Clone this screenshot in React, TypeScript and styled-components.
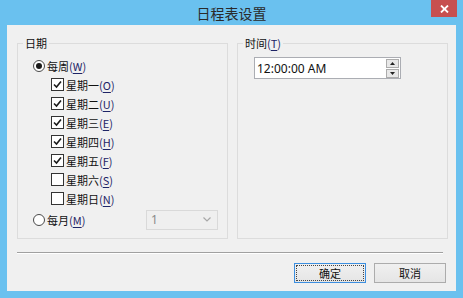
import styled, { createGlobalStyle } from "styled-components";

const GlobalStyle = createGlobalStyle`
  html, body {
    margin: 0;
    padding: 0;
  }
  body {
    font-family: "Noto Sans CJK SC", "Noto Sans", sans-serif;
    font-size: 11px;
    color: #111;
  }
`;

const Window = styled.div`
  width: 463px;
  height: 298px;
  background: #6ac1ef;
  display: flex;
  flex-direction: column;
`;

const TitleBar = styled.div`
  height: 25px;
  display: grid;
  grid-template-columns: 1fr auto 1fr;
  align-items: start;
`;

const Title = styled.div`
  grid-column: 2;
  font-size: 14px;
  line-height: 26px;
  color: #2a2a2a;
`;

const CloseButton = styled.div`
  grid-column: 3;
  justify-self: end;
  margin-right: 6px;
  width: 26px;
  height: 17px;
  background: #c75050;
  display: flex;
  align-items: center;
  justify-content: center;
`;

const Client = styled.div`
  flex: 1;
  margin: 0 7px 7px;
  background: #f0f0f0;
  padding: 18px 8px 0 10px;
  display: flex;
  flex-direction: column;
`;

const Groups = styled.div`
  display: grid;
  grid-template-columns: 211px 211px;
  gap: 9px;
`;

const Group = styled.div`
  position: relative;
  box-sizing: border-box;
  height: 196px;
  border: 1px solid #dcdcdc;
  padding: ${(p: { $pad: string }) => p.$pad};
`;

const Legend = styled.span`
  position: absolute;
  top: -10px;
  left: 5px;
  padding: 0 2px;
  line-height: 18px;
  background: #f0f0f0;
`;

const Row = styled.div<{ $indent: number; $gap?: number }>`
  height: 19px;
  display: flex;
  align-items: center;
  padding-left: ${(p) => p.$indent}px;
  margin-top: ${(p) => p.$gap ?? 0}px;
`;

const Label = styled.span`
  margin-left: 2px;
  line-height: 16px;
  white-space: nowrap;
`;

const Key = styled.span`
  color: #1e2466;
  u {
    text-decoration-thickness: 1px;
    text-underline-offset: 2px;
  }
`;

const Radio = styled.span<{ $on?: boolean }>`
  box-sizing: border-box;
  width: 12px;
  height: 12px;
  border-radius: 50%;
  border: 1px solid #4a4a4a;
  background: #fff;
  display: flex;
  align-items: center;
  justify-content: center;
  &::after {
    content: "";
    width: 6px;
    height: 6px;
    border-radius: 50%;
    background: ${(p) => (p.$on ? "#1a1a1a" : "transparent")};
  }
`;

const Box = styled.span`
  box-sizing: border-box;
  width: 13px;
  height: 13px;
  border: 1px solid #333;
  background: #fff;
  display: flex;
  align-items: center;
  justify-content: center;
`;

const Select = styled.div`
  box-sizing: border-box;
  margin-left: auto;
  margin-right: 9px;
  width: 72px;
  height: 20px;
  border: 1px solid #d9d9d9;
  background: #efefef;
  color: #8a8a8a;
  display: flex;
  align-items: center;
  justify-content: space-between;
  padding: 0 6px 0 4px;
  font-family: "Noto Sans", sans-serif;
  font-size: 12px;
`;

const TimeBox = styled.div`
  box-sizing: border-box;
  width: 147px;
  height: 22px;
  border: 1px solid #abadb3;
  background: #fff;
  display: flex;
  align-items: center;
  padding: 0 1px 0 2px;
  font-family: "Noto Sans", sans-serif;
  font-size: 12px;
`;

const TimeText = styled.span`
  flex: 1;
`;

const Spinner = styled.div`
  display: flex;
  flex-direction: column;
  gap: 1px;
`;

const SpinButton = styled.div`
  box-sizing: border-box;
  width: 13px;
  height: 9px;
  border: 1px solid #acacac;
  background: #e8e8e8;
  display: flex;
  align-items: center;
  justify-content: center;
`;

const Separator = styled.div`
  margin: 13px 5px 0 0;
  border-top: 1px solid #a0a0a0;
  border-bottom: 1px solid #fff;
`;

const Buttons = styled.div`
  margin: 9px 2px 0 0;
  display: flex;
  justify-content: flex-end;
  gap: 8px;
`;

const Button = styled.div<{ $default?: boolean }>`
  box-sizing: border-box;
  width: 72px;
  height: 20px;
  border: 1px solid ${(p) => (p.$default ? "#3c8fe0" : "#acacac")};
  background: linear-gradient(#f0f0f0, #e5e5e5);
  padding: 1px;
  display: flex;
`;

const ButtonFace = styled.span<{ $focus?: boolean }>`
  flex: 1;
  box-sizing: border-box;
  border: 1px dotted ${(p) => (p.$focus ? "#444" : "transparent")};
  display: flex;
  align-items: center;
  justify-content: center;
  line-height: 14px;
`;

const days = [
  { name: "星期一", key: "O", on: true },
  { name: "星期二", key: "U", on: true },
  { name: "星期三", key: "E", on: true },
  { name: "星期四", key: "H", on: true },
  { name: "星期五", key: "F", on: true },
  { name: "星期六", key: "S", on: false },
  { name: "星期日", key: "N", on: false },
];

function Mnemonic({ k }: { k: string }) {
  return (
    <Key>
      (<u>{k}</u>)
    </Key>
  );
}

function Check() {
  return (
    <svg width="9" height="9" viewBox="0 0 9 9">
      <path d="M1 4.5 L3.5 7 L8 1.5" fill="none" stroke="#1a1a1a" strokeWidth="1.6" />
    </svg>
  );
}

export default function App() {
  return (
    <>
      <GlobalStyle />
      <Window>
        <TitleBar>
          <Title>日程表设置</Title>
          <CloseButton>
            <svg width="9" height="8" viewBox="0 0 9 8">
              <path d="M1 0.5 L8 7.5 M8 0.5 L1 7.5" stroke="#fff" strokeWidth="1.8" />
            </svg>
          </CloseButton>
        </TitleBar>
        <Client>
          <Groups>
            <Group $pad="12px 0 0 0">
              <Legend>日期</Legend>
              <Row $indent={15}>
                <Radio $on />
                <Label>
                  每周<Mnemonic k="W" />
                </Label>
              </Row>
              {days.map((d) => (
                <Row key={d.key} $indent={33}>
                  <Box>{d.on && <Check />}</Box>
                  <Label>
                    {d.name}
                    <Mnemonic k={d.key} />
                  </Label>
                </Row>
              ))}
              <Row $indent={15} $gap={2}>
                <Radio />
                <Label>
                  每月<Mnemonic k="M" />
                </Label>
                <Select>
                  <span>1</span>
                  <svg width="8" height="5" viewBox="0 0 8 5">
                    <path d="M0.5 0.5 L4 4 L7.5 0.5" fill="none" stroke="#a8a8a8" strokeWidth="1.2" />
                  </svg>
                </Select>
              </Row>
            </Group>
            <Group $pad="13px 0 0 16px">
              <Legend>
                时间<Mnemonic k="T" />
              </Legend>
              <TimeBox>
                <TimeText>12:00:00 AM</TimeText>
                <Spinner>
                  <SpinButton>
                    <svg width="5" height="3" viewBox="0 0 5 3">
                      <path d="M0 3 L2.5 0 L5 3 Z" fill="#222" />
                    </svg>
                  </SpinButton>
                  <SpinButton>
                    <svg width="5" height="3" viewBox="0 0 5 3">
                      <path d="M0 0 L2.5 3 L5 0 Z" fill="#222" />
                    </svg>
                  </SpinButton>
                </Spinner>
              </TimeBox>
            </Group>
          </Groups>
          <Separator />
          <Buttons>
            <Button $default>
              <ButtonFace $focus>确定</ButtonFace>
            </Button>
            <Button>
              <ButtonFace>取消</ButtonFace>
            </Button>
          </Buttons>
        </Client>
      </Window>
    </>
  );
}
